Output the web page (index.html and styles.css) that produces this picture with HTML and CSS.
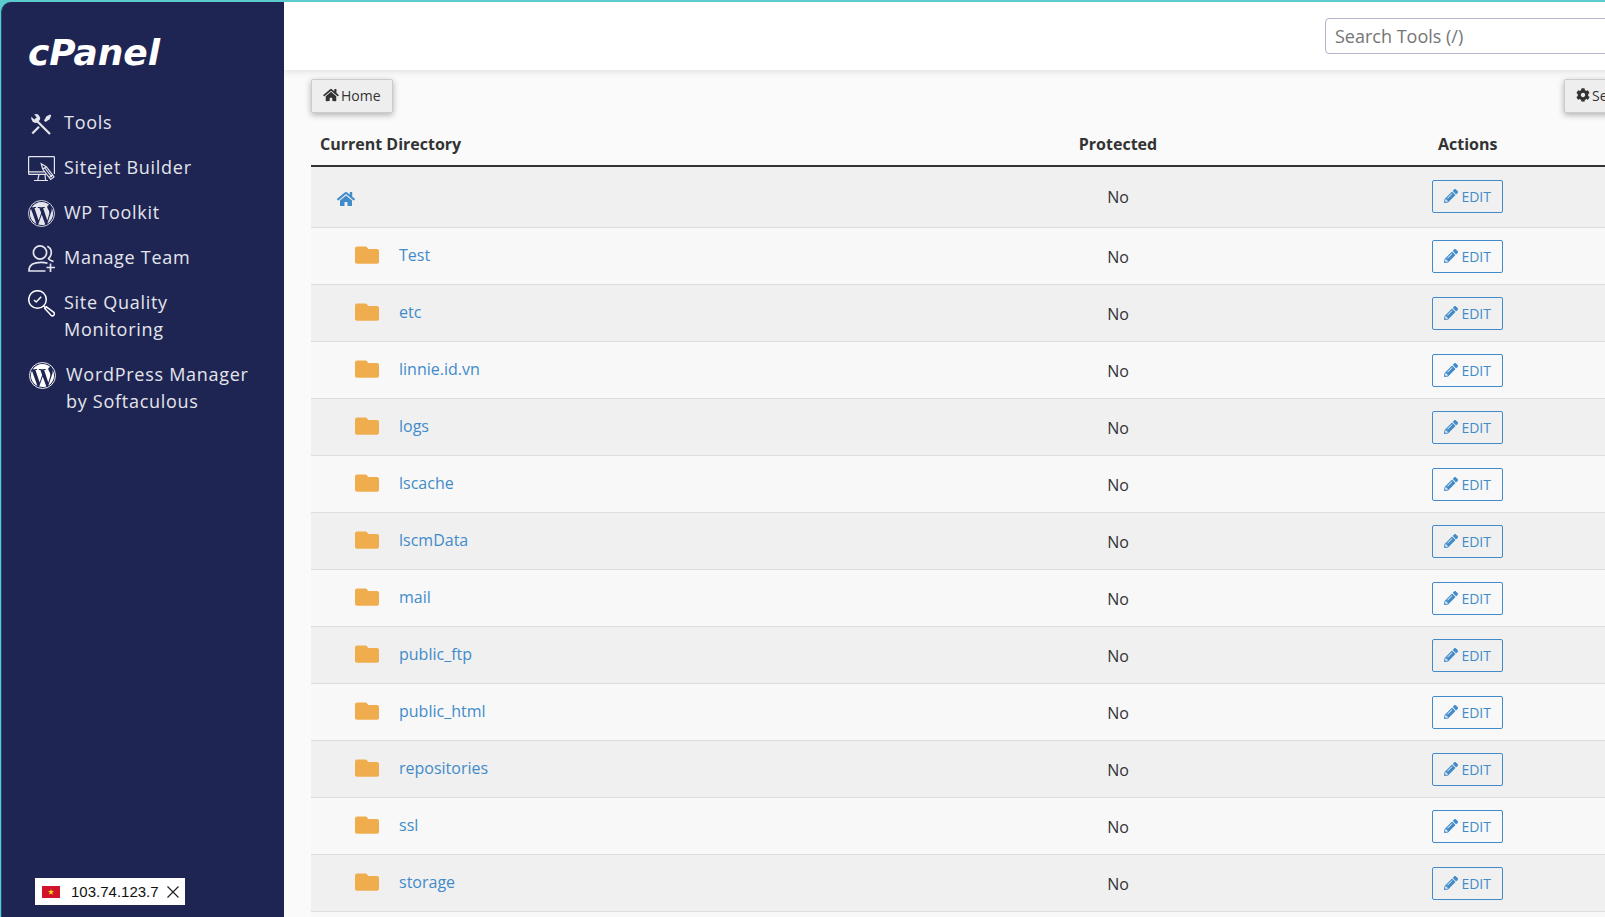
FILE: index.html
```html
<!DOCTYPE html>
<html lang="en">
<head>
<meta charset="utf-8">
<title>Directory Privacy</title>
<link rel="stylesheet" href="styles.css">
</head>
<body>
<svg class="sprite" aria-hidden="true">
  <symbol id="home" viewBox="0 0 576 512"><path d="M280.37 148.26L96 300.11V464a16 16 0 0 0 16 16l112.06-.29a16 16 0 0 0 15.92-16V368a16 16 0 0 1 16-16h64a16 16 0 0 1 16 16v95.64a16 16 0 0 0 16 16.05L464 480a16 16 0 0 0 16-16V300L295.67 148.26a12.19 12.19 0 0 0-15.3 0zM571.6 251.47L488 182.56V44.05a12 12 0 0 0-12-12h-56a12 12 0 0 0-12 12v72.61L318.47 43a48 48 0 0 0-61 0L4.34 251.47a12 12 0 0 0-1.6 16.9l25.5 31A12 12 0 0 0 45.15 301l235.22-193.74a12.19 12.19 0 0 1 15.3 0L530.9 301a12 12 0 0 0 16.9-1.6l25.5-31a12 12 0 0 0-1.7-16.93z"/></symbol>
  <symbol id="cog" viewBox="0 0 512 512"><path d="M487.4 315.7l-42.6-24.6c4.3-23.2 4.3-47 0-70.2l42.6-24.6c4.9-2.8 7.1-8.6 5.5-14-11.1-35.6-30-67.8-54.7-94.6-3.8-4.1-10-5.1-14.8-2.3L380.8 110c-17.9-15.4-38.5-27.3-60.8-35.1V25.8c0-5.6-3.9-10.5-9.4-11.7-36.7-8.2-74.3-7.8-109.2 0-5.5 1.2-9.4 6.1-9.4 11.7V75c-22.2 7.9-42.8 19.8-60.8 35.1L88.7 85.5c-4.9-2.8-11-1.9-14.8 2.3-24.7 26.7-43.6 58.9-54.7 94.6-1.7 5.4.6 11.2 5.5 14L67.3 221c-4.3 23.2-4.3 47 0 70.2l-42.6 24.6c-4.9 2.8-7.1 8.6-5.5 14 11.1 35.6 30 67.8 54.7 94.6 3.8 4.1 10 5.1 14.8 2.3l42.6-24.6c17.9 15.4 38.5 27.3 60.8 35.1v49.2c0 5.6 3.9 10.5 9.4 11.7 36.7 8.2 74.3 7.8 109.2 0 5.5-1.2 9.4-6.1 9.4-11.7v-49.2c22.2-7.9 42.8-19.8 60.8-35.1l42.6 24.6c4.9 2.8 11 1.9 14.8-2.3 24.7-26.7 43.6-58.9 54.7-94.6 1.5-5.5-.7-11.3-5.6-14.1zM256 336c-44.1 0-80-35.9-80-80s35.9-80 80-80 80 35.9 80 80-35.9 80-80 80z"/></symbol>
  <symbol id="pencil" viewBox="0 0 512 512"><path d="M497.9 142.1l-46.1 46.1c-4.7 4.7-12.3 4.7-17 0l-111-111c-4.7-4.7-4.7-12.3 0-17l46.1-46.1c18.7-18.7 49.1-18.7 67.9 0l60.1 60.1c18.8 18.7 18.8 49.1 0 67.9zM284.2 99.8L21.6 362.4.4 483.9c-2.9 16.4 11.4 30.6 27.8 27.8l121.5-21.3 262.6-262.6c4.7-4.7 4.7-12.3 0-17l-111-111c-4.8-4.7-12.4-4.7-17.1 0zM124.1 339.9c-5.5-5.5-5.5-14.3 0-19.8l154-154c5.5-5.5 14.3-5.5 19.8 0s5.5 14.3 0 19.8l-154 154c-5.5 5.5-14.3 5.5-19.8 0zM88 424h48v36.3l-64.5 11.3-31.1-31.1L51.7 376H88v48z"/></symbol>
  <symbol id="folder" viewBox="0 0 24 18"><path d="M2 .5h8.500q.8 0 1.300.6L13.200 3H22q2 0 2 2v11q0 1.800-2 1.800H2Q0 17.800 0 16V2.500Q0 .5 2 .5z"/></symbol>
  <symbol id="wordpress" viewBox="8 8 496 496"><path d="M61.7 169.4l101.5 278C92.2 413 43.3 340.2 43.3 256c0-30.9 6.6-60.1 18.4-86.6zm337.9 75.9c0-26.3-9.4-44.5-17.5-58.7-10.8-17.5-20.9-32.4-20.9-49.9 0-19.6 14.8-37.8 35.7-37.8.9 0 1.8.1 2.8.2-37.9-34.7-88.3-55.9-143.7-55.9-74.3 0-139.7 38.1-177.8 95.9 5 .2 9.7.3 13.700.3 22.200 0 56.700-2.700 56.700-2.700 11.500-.7 12.800 16.200 1.400 17.500 0 0-11.500 1.300-24.300 2l77.500 230.400L249.800 247l-33.100-90.800c-11.500-.7-22.300-2-22.300-2-11.500-.7-10.100-18.200 1.300-17.500 0 0 35.100 2.700 56 2.700 22.200 0 56.700-2.700 56.700-2.700 11.500-.7 12.800 16.200 1.400 17.500 0 0-11.500 1.300-24.300 2l76.900 228.700 21.200-70.900c9-29.400 16-50.500 16-68.700zm-139.900 29.300l-63.800 185.500c19.100 5.600 39.200 8.700 60.100 8.700 24.800 0 48.500-4.300 70.600-12.100-.6-.9-1.100-1.900-1.500-2.900l-65.400-179.200zm183-120.700c.9 6.800 1.400 14 1.400 21.900 0 21.600-4 45.800-16.200 76.200l-65 187.900C426.200 403 468.700 334.500 468.700 256c0-37-9.400-71.800-26-102.100z"/><circle cx="256" cy="256" r="239" fill="none" stroke="currentColor" stroke-width="17"/></symbol>
</svg>
<div class="app">
  <aside class="sidebar">
    <a class="logo" href="#">cPanel</a>
    <nav class="menu">
      <a class="menu-item" href="#">
        <svg class="menu-icon" viewBox="0 -1 27 27"><path d="M9.500 10.500 22 23" fill="none" stroke="currentColor" stroke-width="2.200"/><path d="M3.300 5.800 6.300 8.600 8.800 6.200 6.200 3.400Q9 2.400 11 4.400 12.700 6.200 11.800 9L9 11.800Q6.300 12.400 4.500 10.600 2.700 8.700 3.300 5.800z"/><path d="M16 9.400 18.500 5.300 22.200 3.600 23.200 4.600 21.700 8.200 17.500 10.900z"/><path d="M11 15.800 4.300 22.500" stroke="currentColor" stroke-width="2.200"/></svg>
        <span>Tools</span>
      </a>
      <a class="menu-item" href="#">
        <svg class="menu-icon line" viewBox="0 0 27 27" stroke="currentColor"><path d="M18 19.300H1.200q-.6 0-.6-.6V2.200q0-.6.6-.6H25.800q.6 0 .6.600V19M1 16.800H16.500M11 19.500 9.800 25M17 19.500 17.600 25M6 25.500H20" stroke-width="1.200"/><path d="M13.200 8.700 14.700 14 22.700 24.500 26 22 18.300 11.700zM16.500 12.500 23.800 22.200M14.700 14 18.300 11.700M21.200 22.400 24.500 20" stroke-width="1.200"/></svg>
        <span>Sitejet Builder</span>
      </a>
      <a class="menu-item" href="#">
        <svg class="menu-icon"><use href="#wordpress"/></svg>
        <span>WP Toolkit</span>
      </a>
      <a class="menu-item" href="#">
        <svg class="menu-icon line" viewBox="0 0 27 27" stroke="currentColor" stroke-width="1.700"><circle cx="12" cy="7.500" r="6.600"/><path d="M19.300 1.200Q23.300 3 23.300 7.500 23.300 11 20.500 13.500 21 15 25.500 16.500M17.500 26H1Q.8 21.500 4.500 19 8 17.300 13 17.300 17 17.300 19.500 18.300M22.500 18.500V27M18.500 22.500H27"/></svg>
        <span>Manage Team</span>
      </a>
      <a class="menu-item" href="#">
        <svg class="menu-icon line bright" viewBox="0 0 27 27" stroke="currentColor" stroke-width="1.500"><circle cx="9.500" cy="9.500" r="8.800"/><path d="M15.500 15.800 18 18.300M18.300 16.800 16.800 18.500 23 25.300Q24.500 26.500 25.800 25.200 27 23.700 25.800 22.300zM6 10 8.200 12 13.200 6.800"/></svg>
        <span>Site Quality Monitoring</span>
      </a>
      <a class="menu-item plugin" href="#">
        <svg class="menu-icon bright"><use href="#wordpress"/></svg>
        <span>WordPress Manager by Softaculous</span>
      </a>
    </nav>
  </aside>
  <div class="page">
    <header class="topbar">
      <input class="search" type="search" placeholder="Search Tools (/)" aria-label="Search Tools">
    </header>
    <main class="content">
      <div class="toolbar">
        <button class="btn" type="button"><svg class="btn-home"><use href="#home"/></svg>Home</button>
        <button class="btn" type="button"><svg class="btn-cog"><use href="#cog"/></svg>Settings</button>
      </div>
      <table class="dirs">
        <thead><tr><th class="name">Current Directory</th><th class="protected">Protected</th><th>Actions</th></tr></thead>
        <tbody>
          <tr class="root"><td class="name"><a href="#" aria-label="Home directory"><svg class="root-icon"><use href="#home"/></svg></a></td><td>No</td><td><button class="edit" type="button"><svg><use href="#pencil"/></svg>EDIT</button></td></tr>
          <tr><td class="name"><a class="dir" href="#"><svg><use href="#folder"/></svg>Test</a></td><td>No</td><td><button class="edit" type="button"><svg><use href="#pencil"/></svg>EDIT</button></td></tr>
          <tr><td class="name"><a class="dir" href="#"><svg><use href="#folder"/></svg>etc</a></td><td>No</td><td><button class="edit" type="button"><svg><use href="#pencil"/></svg>EDIT</button></td></tr>
          <tr><td class="name"><a class="dir" href="#"><svg><use href="#folder"/></svg>linnie.id.vn</a></td><td>No</td><td><button class="edit" type="button"><svg><use href="#pencil"/></svg>EDIT</button></td></tr>
          <tr><td class="name"><a class="dir" href="#"><svg><use href="#folder"/></svg>logs</a></td><td>No</td><td><button class="edit" type="button"><svg><use href="#pencil"/></svg>EDIT</button></td></tr>
          <tr><td class="name"><a class="dir" href="#"><svg><use href="#folder"/></svg>lscache</a></td><td>No</td><td><button class="edit" type="button"><svg><use href="#pencil"/></svg>EDIT</button></td></tr>
          <tr><td class="name"><a class="dir" href="#"><svg><use href="#folder"/></svg>lscmData</a></td><td>No</td><td><button class="edit" type="button"><svg><use href="#pencil"/></svg>EDIT</button></td></tr>
          <tr><td class="name"><a class="dir" href="#"><svg><use href="#folder"/></svg>mail</a></td><td>No</td><td><button class="edit" type="button"><svg><use href="#pencil"/></svg>EDIT</button></td></tr>
          <tr><td class="name"><a class="dir" href="#"><svg><use href="#folder"/></svg>public_ftp</a></td><td>No</td><td><button class="edit" type="button"><svg><use href="#pencil"/></svg>EDIT</button></td></tr>
          <tr><td class="name"><a class="dir" href="#"><svg><use href="#folder"/></svg>public_html</a></td><td>No</td><td><button class="edit" type="button"><svg><use href="#pencil"/></svg>EDIT</button></td></tr>
          <tr><td class="name"><a class="dir" href="#"><svg><use href="#folder"/></svg>repositories</a></td><td>No</td><td><button class="edit" type="button"><svg><use href="#pencil"/></svg>EDIT</button></td></tr>
          <tr><td class="name"><a class="dir" href="#"><svg><use href="#folder"/></svg>ssl</a></td><td>No</td><td><button class="edit" type="button"><svg><use href="#pencil"/></svg>EDIT</button></td></tr>
          <tr><td class="name"><a class="dir" href="#"><svg><use href="#folder"/></svg>storage</a></td><td>No</td><td><button class="edit" type="button"><svg><use href="#pencil"/></svg>EDIT</button></td></tr>
          <tr><td class="name"></td><td></td><td></td></tr>
        </tbody>
      </table>
    </main>
  </div>
</div>
<div class="ip-badge">
  <svg class="flag" viewBox="0 0 18 12"><path fill="#d0142c" d="M0 0h18v12H0z"/><path fill="#ffe01b" d="m9 3 .7 2.100H12l-1.800 1.400.7 2.200L9 7.400 7.100 8.700l.7-2.200L6 5.100h2.300z"/></svg>
  <span class="ip">103.74.123.7</span>
  <button class="close" type="button" aria-label="Close"><svg viewBox="0 0 12 12"><path d="M.5.5l11 11M11.500.5l-11 11" fill="none" stroke="#222" stroke-width="1.200"/></svg></button>
</div>
</body>
</html>
```
FILE: styles.css
```css
* { box-sizing: border-box; }

body {
  margin: 0;
  height: 100vh;
  overflow: hidden;
  background: #5ccbcd;
  color: #333;
  font: 16px/24px "Open Sans", sans-serif;
}

a { color: #428bca; text-decoration: none; }
button { font-family: inherit; cursor: pointer; }
svg { fill: currentColor; flex: none; }
svg.line { fill: none; }
.sprite { display: none; }

.app {
  display: flex;
  /* the page runs past the right edge of the window */
  width: calc(100% + 78px);
  height: 100vh;
  padding: 2px 0 0 1px;
}

.sidebar {
  flex: none;
  width: 283px;
  padding: 31px 26px 0;
  border-left: 1px solid #1c4f6c;
  border-top-left-radius: 10px;
  background: #1f2553;
}

.logo {
  display: block;
  color: #fff;
  font: italic 700 36px/40px "DejaVu Sans", sans-serif;
}

.menu { margin-top: 27px; }

.menu-item {
  display: flex;
  gap: 9px;
  padding: 9px 0;
  color: #e4e5ec;
  font-size: 18px;
  line-height: 27px;
  letter-spacing: .04em;
}

.plugin { padding-left: 1px; gap: 10px; }
.menu-icon { width: 27px; height: 27px; margin: 1px 0 -1px; }
.bright { color: #fff; }

.page {
  flex: 1;
  min-width: 0;
  overflow: hidden;
  background: #fafafa;
}

.topbar {
  display: flex;
  justify-content: flex-end;
  align-items: center;
  height: 68px;
  padding: 0 27px;
  background: #fff;
  box-shadow: 0 0 8px rgba(0, 0, 0, .16);
}

.search {
  width: 331px;
  height: 36px;
  padding: 0 9px;
  border: 1px solid #b5b5cb;
  border-radius: 4px;
  background: #fff;
  font: 18px "Open Sans", sans-serif;
}

.search::placeholder { color: #757575; }

.content { padding: 9px 27px 0; }
.toolbar { display: flex; justify-content: space-between; }

.btn {
  display: flex;
  align-items: center;
  gap: 2px;
  height: 34px;
  padding: 0 11px 2px;
  border: 1px solid #ccc;
  border-radius: 2px;
  background: #eee;
  color: #333;
  font-size: 14px;
  box-shadow: 0 2px 6px rgba(0, 0, 0, .3);
}

.btn-home { width: 16px; height: 14px; }
.btn-cog { width: 14px; height: 14px; }

.dirs {
  width: 100%;
  margin-top: 10px;
  border-collapse: separate;
  border-spacing: 0;
  table-layout: fixed;
}

.dirs th {
  padding: 9px;
  border-bottom: 2px solid #333;
}

.dirs td {
  height: 57px;
  padding: 1px 9px 0;
  border-bottom: 1px solid #ddd;
  background: #f8f8f8;
  text-align: center;
}

.dirs tr:nth-child(odd) td { background: #f0f0f0; }
.dirs .name { text-align: left; }
.dirs td.name { padding-bottom: 4px; }
.dirs .root td { height: 61px; padding: 0 9px 1px; }
.dirs th.name { width: 48%; }
.dirs th.protected { width: 24%; }

.root-icon {
  display: block;
  width: 18px;
  height: 16px;
  margin: 4px 0 0 17px;
}

.dir {
  display: flex;
  align-items: center;
  gap: 20px;
  padding-left: 35px;
}

.dir svg { width: 24px; height: 18px; color: #f0ad4e; }

.edit {
  display: inline-flex;
  align-items: center;
  gap: 3px;
  height: 33px;
  padding: 0 11px 1px;
  border: 1px solid #428bca;
  border-radius: 2px;
  background: transparent;
  color: #428bca;
  font-size: 14px;
  vertical-align: middle;
}

.edit svg { width: 14px; height: 14px; }

.ip-badge {
  position: fixed;
  left: 35px;
  bottom: 12px;
  display: flex;
  align-items: center;
  gap: 8px;
  height: 27px;
  padding: 0 6px 0 7px;
  background: #fff;
  color: #111;
  font: 15px "Liberation Sans", Arial, sans-serif;
}

.flag { width: 18px; height: 12px; }
.ip { padding-left: 3px; }

.close {
  display: flex;
  padding: 0;
  border: 0;
  background: none;
}

.close svg { width: 12px; height: 12px; }
```
